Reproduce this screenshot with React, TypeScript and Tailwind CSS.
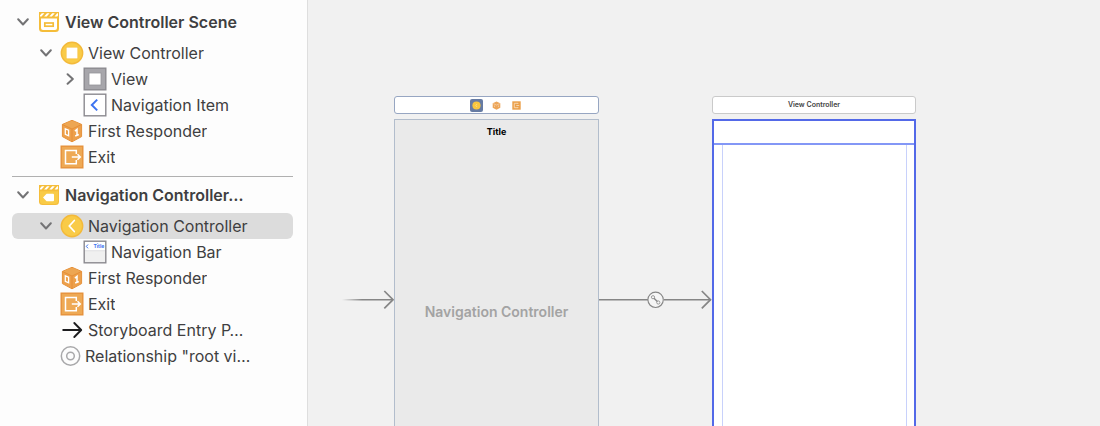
import type { ReactNode } from "react";

function Chevron({ open }: { open: boolean }) {
  return (
    <svg viewBox="0 0 12 12" className="size-3" fill="none" stroke="#737375" strokeWidth="2" strokeLinecap="round" strokeLinejoin="round">
      <path d={open ? "M1.2 3.3 6 8.5 10.8 3.3" : "M4.6 1.2 9.8 6 4.6 10.8"} />
    </svg>
  );
}

function SceneIcon({ filled }: { filled?: boolean }) {
  return (
    <svg viewBox="0 0 20 20" className="size-5">
      <path d="M0 0H20V16.5A3.5 3.5 0 0 1 16.5 20H3.5A3.5 3.5 0 0 1 0 16.5Z" fill="#f5bd3a" />
      <path d="M2.8 1.2H5.4L2.5 4.4H1V3.3ZM8 1.2H10.6L7.7 4.4H5.1ZM13.2 1.2H15.8L12.9 4.4H10.3ZM18.2 1.2H19V3.6L18.3 4.4H15.5Z" fill="#fff" />
      {filled ? (
        <>
          <path d="M1 6.2H19V16A3 3 0 0 1 16 19H4A3 3 0 0 1 1 16Z" fill="#f9cb47" />
          <path d="M4 12.5 7.6 8.8H14a1 1 0 0 1 1 1v5.4a1 1 0 0 1-1 1H7.6Z" fill="#fff" />
        </>
      ) : (
        <>
          <path d="M2 6.6H18V16A2 2 0 0 1 16 18H4A2 2 0 0 1 2 16Z" fill="#fff" />
          <rect x="5.8" y="11" width="8.4" height="3.2" fill="#fff" stroke="#f5bd3a" strokeWidth="1.7" />
        </>
      )}
    </svg>
  );
}

function ControllerIcon({ back }: { back?: boolean }) {
  return (
    <svg viewBox="0 0 24 24" className="size-6">
      <circle cx="12" cy="12" r="10.7" fill="#f9cb47" stroke="#f3b93a" strokeWidth="1.4" />
      {back ? (
        <path d="M14.3 6.5 9.3 12 14.3 17.5" fill="none" stroke="#fff" strokeWidth="1.7" strokeLinecap="round" />
      ) : (
        <rect x="6.2" y="6.2" width="11.6" height="11.6" fill="#fff" stroke="#f6bd38" strokeWidth=".5" />
      )}
    </svg>
  );
}

function ViewIcon() {
  return (
    <svg viewBox="0 0 24 24" className="size-6">
      <rect x="1.2" y="1.2" width="21.6" height="21.6" fill="#a7a6ab" stroke="#8b8a90" strokeWidth="1.4" />
      <rect x="6" y="6" width="12" height="12" fill="#fff" stroke="#95949a" strokeWidth=".8" />
    </svg>
  );
}

function NavItemIcon() {
  return (
    <svg viewBox="0 0 24 24" className="size-6">
      <rect x="1.2" y="1.2" width="21.6" height="21.6" fill="#fff" stroke="#8b8a90" strokeWidth="1.4" />
      <path d="M14.2 6.6 8.8 12 14.2 17.4" fill="none" stroke="#3d73f0" strokeWidth="2" />
    </svg>
  );
}

function NavBarIcon() {
  return (
    <svg viewBox="0 0 24 24" className="size-6">
      <rect x="1.2" y="1.2" width="21.6" height="21.6" fill="#f0f0f0" stroke="#8b8a90" strokeWidth="1.4" />
      <path d="M2 2H22V10.5H2Z" fill="#fff" />
      <path d="M2 10.7H22" stroke="#d4d4d6" strokeWidth=".6" />
      <path d="M5 4.5 3.3 6.4 5 8.3" fill="none" stroke="#3d73f0" strokeWidth="1" />
      <text x="10.4" y="8.2" fontSize="5" fontWeight="700" fill="#3d73f0" fontFamily="Inter, sans-serif">Title</text>
    </svg>
  );
}

function ResponderIcon() {
  return (
    <svg viewBox="0 0 24 24" className="size-6">
      <path d="M12 1.3 21.6 5.4V17.6L12 22.8 2.4 17.6V5.4Z" fill="#eda04b" stroke="#e6913a" strokeWidth="1" strokeLinejoin="round" />
      <path d="M12 1.8 21 5.6 12 9.8 3 5.6Z" fill="#eda652" />
      <path d="M2.4 5.5 12 10 21.6 5.5M12 10V22.6" fill="none" stroke="#e58d35" strokeWidth=".9" />
      <path d="M5.3 9.8 8.6 11.2V16.8L5.3 15.3Z" fill="none" stroke="#fff" strokeWidth="1.3" />
      <path d="M14.9 12.1 17 10.4V16.3M15.2 17 18.8 15.5" fill="none" stroke="#fff" strokeWidth="1.5" />
    </svg>
  );
}

function ExitIcon() {
  return (
    <svg viewBox="0 0 24 24" className="size-6">
      <rect x="1.2" y="1.2" width="21.6" height="21.6" fill="#eea954" stroke="#e6913a" strokeWidth="1.4" />
      <path d="M16.3 9V5.4H5.5V18.7H16.3V15" fill="none" stroke="#fff" strokeWidth="1.5" />
      <path d="M11.8 12H20M17.5 9.2 20.3 12 17.5 14.8" fill="none" stroke="#fff" strokeWidth="1.5" />
    </svg>
  );
}

function EntryIcon() {
  return (
    <svg viewBox="0 0 24 24" className="size-6" fill="none" stroke="#1d1d1f" strokeWidth="1.9" strokeLinecap="round" strokeLinejoin="round">
      <path d="M3.2 12H21M14.3 5 21.2 12 14.3 19" />
    </svg>
  );
}

function RelationshipIcon() {
  return (
    <svg viewBox="0 0 21 24" className="h-6 w-[21px]" fill="none" stroke="#a9a9ab" strokeWidth="1.5">
      <circle cx="10.5" cy="12" r="9.2" />
      <circle cx="10.5" cy="12" r="3.8" />
    </svg>
  );
}

type RowProps = { icon: ReactNode; label: string; level?: 1 | 2; open?: boolean; selected?: boolean };

function Row({ icon, label, level = 1, open, selected }: RowProps) {
  return (
    <li className={`flex h-[26px] items-center rounded-md ${level === 2 ? "pl-[51px]" : "pl-7"} ${selected ? "bg-[#dcdcdc]" : ""}`}>
      <span className="flex w-5 shrink-0">
        {open !== undefined && (
          <button type="button" aria-label={`Toggle ${label}`} aria-expanded={open}>
            <Chevron open={open} />
          </button>
        )}
      </span>
      <span className="mr-1 shrink-0">{icon}</span>
      <span className="truncate">{label}</span>
    </li>
  );
}

function SceneHeader({ label, filled }: { label: string; filled?: boolean }) {
  return (
    <h2 className="mb-[5px] flex h-[26px] items-center pl-[5px] font-semibold">
      <button type="button" aria-label={`Toggle ${label}`} aria-expanded="true" className="mr-[10px]">
        <Chevron open />
      </button>
      <span className="mr-[6px] shrink-0">
        <SceneIcon filled={filled} />
      </span>
      <span className="truncate">{label}</span>
    </h2>
  );
}

function Outline() {
  return (
    <nav aria-label="Document outline" className="w-[308px] shrink-0 border-r border-[#dedede] bg-[#fdfdfd] pt-[9px] pr-[14px] pl-3 text-base text-[#3f3f41]">
      <section>
        <SceneHeader label="View Controller Scene" />
        <ul>
          <Row icon={<ControllerIcon />} label="View Controller" open />
          <Row icon={<ViewIcon />} label="View" level={2} open={false} />
          <Row icon={<NavItemIcon />} label="Navigation Item" level={2} />
          <Row icon={<ResponderIcon />} label="First Responder" />
          <Row icon={<ExitIcon />} label="Exit" />
        </ul>
      </section>
      <section className="mt-[6px] border-t border-[#b0b0b0] pt-[5px]">
        <SceneHeader label="Navigation Controller…" filled />
        <ul>
          <Row icon={<ControllerIcon back />} label="Navigation Controller" open selected />
          <Row icon={<NavBarIcon />} label="Navigation Bar" level={2} />
          <Row icon={<ResponderIcon />} label="First Responder" />
          <Row icon={<ExitIcon />} label="Exit" />
          <Row icon={<EntryIcon />} label="Storyboard Entry P…" />
          <Row icon={<RelationshipIcon />} label={'Relationship "root vi…'} />
        </ul>
      </section>
    </nav>
  );
}

function DockIcons() {
  return (
    <>
      <span className="flex size-[13px] items-center justify-center rounded-xs bg-[#667ba3]">
        <svg viewBox="0 0 9 9" className="size-[9px]">
          <circle cx="4.5" cy="4.5" r="4.1" fill="#f7c63f" />
          <path d="M5 3 3.8 4.5 5 6" fill="none" stroke="#fae29b" strokeWidth=".7" />
        </svg>
      </span>
      <span className="flex size-[13px] items-center justify-center">
        <svg viewBox="0 0 9 9" className="size-[9px]">
          <path d="M4.5.4 8.3 2.2V6.8L4.5 8.7.7 6.8V2.2Z" fill="#eda659" />
          <path d="M1.2 2.6 4.5 4.1 7.8 2.6M2.5 4.5V6M6.5 4.5V6" fill="none" stroke="#f9dfc2" strokeWidth=".6" />
        </svg>
      </span>
      <span className="flex size-[13px] items-center justify-center">
        <svg viewBox="0 0 9 9" className="size-[9px]">
          <path d="M.3.3H8.7V8.7H.3Z" fill="#eba04a" />
          <path d="M6 3V2.3H2.3V6.7H6V6M4.3 4.5H7.2" fill="none" stroke="#f9dfc2" strokeWidth=".8" />
        </svg>
      </span>
    </>
  );
}

function Canvas() {
  return (
    <main className="flex min-w-0 flex-1 overflow-hidden bg-[#f1f1f1] pt-24 pl-[34px]">
      <svg viewBox="0 0 52 24" className="mt-48 h-6 w-[52px] shrink-0" fill="none" aria-label="Storyboard entry point">
        <defs>
          <linearGradient id="fade" x1="0" x2="20" y1="0" y2="0" gradientUnits="userSpaceOnUse">
            <stop stopColor="#868686" stopOpacity="0" />
            <stop offset="1" stopColor="#868686" />
          </linearGradient>
        </defs>
        <path d="M-1 11H51V12.4H-1Z" fill="url(#fade)" />
        <path d="M42.3 3 51 11.7 42.3 20.4" stroke="#868686" strokeWidth="1.7" />
      </svg>
      <section aria-label="Navigation Controller" className="flex w-[205px] shrink-0 flex-col gap-[5px]">
        <div className="flex h-[18px] shrink-0 items-center justify-center gap-[7px] rounded-[3px] border border-[#97a6c2] bg-white">
          <DockIcons />
        </div>
        <div className="flex flex-1 flex-col items-center border border-b-0 border-[#b2bdcc] bg-[#eaeaea] pt-[6px]">
          <p className="text-[9px] leading-3 font-bold text-black">Title</p>
          <p className="mt-[164px] text-sm font-semibold text-[#a3a3a3]">Navigation Controller</p>
        </div>
      </section>
      <svg viewBox="0 0 113 24" className="mt-48 h-6 w-[113px] shrink-0" fill="none" stroke="#868686" aria-label="Root view controller relationship">
        <path d="M0 11.7H49M65 11.7H112" strokeWidth="1.4" />
        <path d="M102.8 3 111.5 11.7 102.8 20.4" strokeWidth="1.7" />
        <circle cx="56.6" cy="11.8" r="7.7" fill="#f5f5f5" strokeWidth="1.1" />
        <path d="M55 10.2 58.3 13.5" strokeWidth="1.4" />
        <circle cx="54" cy="9.2" r="1.6" strokeWidth=".8" />
        <circle cx="59.3" cy="14.5" r="1.6" strokeWidth=".8" />
      </svg>
      <section aria-label="View Controller" className="flex w-[204px] shrink-0 flex-col gap-[5px]">
        <h3 className="flex h-[18px] shrink-0 items-center justify-center rounded-[3px] border border-[#cacaca] bg-white pt-px text-[7px] font-semibold text-[#444]">
          View Controller
        </h3>
        <div className="flex flex-1 flex-col border-2 border-b-0 border-[#5369e8] bg-white">
          <div className="h-6 shrink-0 border-b-2 border-[#8397f6]" />
          <div className="mr-[7px] ml-2 flex-1 border-x border-[#c8d1fb]" />
        </div>
      </section>
    </main>
  );
}

export default function App() {
  return (
    <div className="flex h-screen overflow-hidden font-[Inter,sans-serif]">
      <Outline />
      <Canvas />
    </div>
  );
}
